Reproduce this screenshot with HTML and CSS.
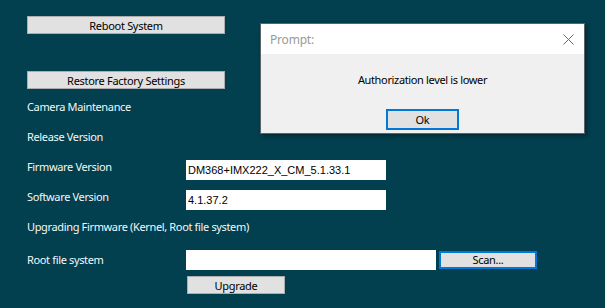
FILE: index.html
```html
<!DOCTYPE html>
<html lang="en">
<head>
    <meta charset="UTF-8">
    <title>Camera Maintenance</title>
    <link rel="stylesheet" href="styles.css">
</head>
<body>
    <div class="page">
        <button class="btn btn-wide">Reboot System</button>
        <button class="btn btn-wide restore">Restore Factory Settings</button>

        <div class="row"><span class="label">Camera Maintenance</span></div>
        <div class="row"><span class="label">Release Version</span></div>
        <div class="row">
            <span class="label">Firmware Version</span>
            <input class="field" type="text" value="DM368+IMX222_X_CM_5.1.33.1">
        </div>
        <div class="row">
            <span class="label">Software Version</span>
            <input class="field" type="text" value="4.1.37.2">
        </div>
        <div class="row"><span class="label">Upgrading Firmware (Kernel, Root file system)</span></div>
        <div class="row root-row">
            <span class="label">Root file system</span>
            <input class="field field-long" type="text">
            <button class="btn btn-scan focused">Scan...</button>
        </div>
        <button class="btn btn-upgrade">Upgrade</button>
    </div>

    <!-- prompt window sits over the page -->
    <div class="dialog">
        <div class="dialog-title">
            <span>Prompt:</span>
            <svg class="close" width="11" height="11" viewBox="0 0 11 11">
                <path d="M0.5 0.5 L10.5 10.5 M10.5 0.5 L0.5 10.5" stroke="#6a6a6a" stroke-width="1" fill="none"/>
            </svg>
        </div>
        <div class="dialog-body">
            <p class="message">Authorization level is lower</p>
            <button class="btn btn-ok focused">Ok</button>
        </div>
    </div>
</body>
</html>
```

FILE: styles.css
```css
* {
    margin: 0;
    padding: 0;
    box-sizing: border-box;
}

body {
    font-family: "Noto Sans", Arial, sans-serif;
    font-size: 11px;
    letter-spacing: -0.35px;
    background-color: #023f4f;
    color: #f4f8f8;
    width: 605px;
    height: 308px;
    overflow: hidden;
    position: relative;
}

.page {
    padding: 16px 0 0 27px;
}

.btn {
    display: block;
    font-family: "Noto Sans", Arial, sans-serif;
    font-size: 11px;
    letter-spacing: -0.3px;
    color: #000;
    background: #e1e1e1;
    border: 1px solid #adadad;
    height: 18px;
    line-height: 15px;
    padding: 0;
}

.btn.focused {
    border: 2px solid #0078d7;
}

.btn-wide {
    width: 198px;
}

.restore {
    margin-top: 37px;
}

.row {
    display: flex;
    align-items: flex-start;
    height: 30px;
}

.restore + .row {
    margin-top: 3px;
}

.label {
    width: 159px;
    line-height: 29px;
    white-space: nowrap;
}

.field {
    width: 200px;
    height: 20px;
    margin-top: 8px;
    border: none;
    background: #fff;
    font-family: "Liberation Sans", Arial, sans-serif;
    font-size: 11px;
    letter-spacing: 0;
    color: #000;
    padding: 0 2px;
}

.root-row {
    margin-top: 3px;
}

.root-row .field {
    margin-top: 5px;
}

.field-long {
    width: 250px;
}

.btn-scan {
    width: 98px;
    height: 18px;
    margin: 6px 0 0 3px;
    line-height: 14px;
}

.btn-upgrade {
    width: 98px;
    margin: 1px 0 0 160px;
}

.dialog {
    position: absolute;
    left: 260px;
    top: 23px;
    width: 325px;
    height: 111px;
    border: 1px solid #5c6266;
    background: #f0f0f0;
    box-shadow: 2px 2px 4px rgba(0, 0, 0, 0.35);
}

.dialog-title {
    height: 30px;
    background: #fff;
    color: #999;
    font-size: 12px;
    letter-spacing: -0.2px;
    display: flex;
    align-items: center;
    justify-content: space-between;
    padding: 0 10px 0 9px;
}

.close {
    display: block;
}

.dialog-body {
    display: flex;
    flex-direction: column;
    align-items: center;
    color: #000;
}

.message {
    margin-top: 17px;
    line-height: 18px;
}

.btn-ok {
    width: 73px;
    height: 21px;
    line-height: 17px;
    margin-top: 20px;
}
```
